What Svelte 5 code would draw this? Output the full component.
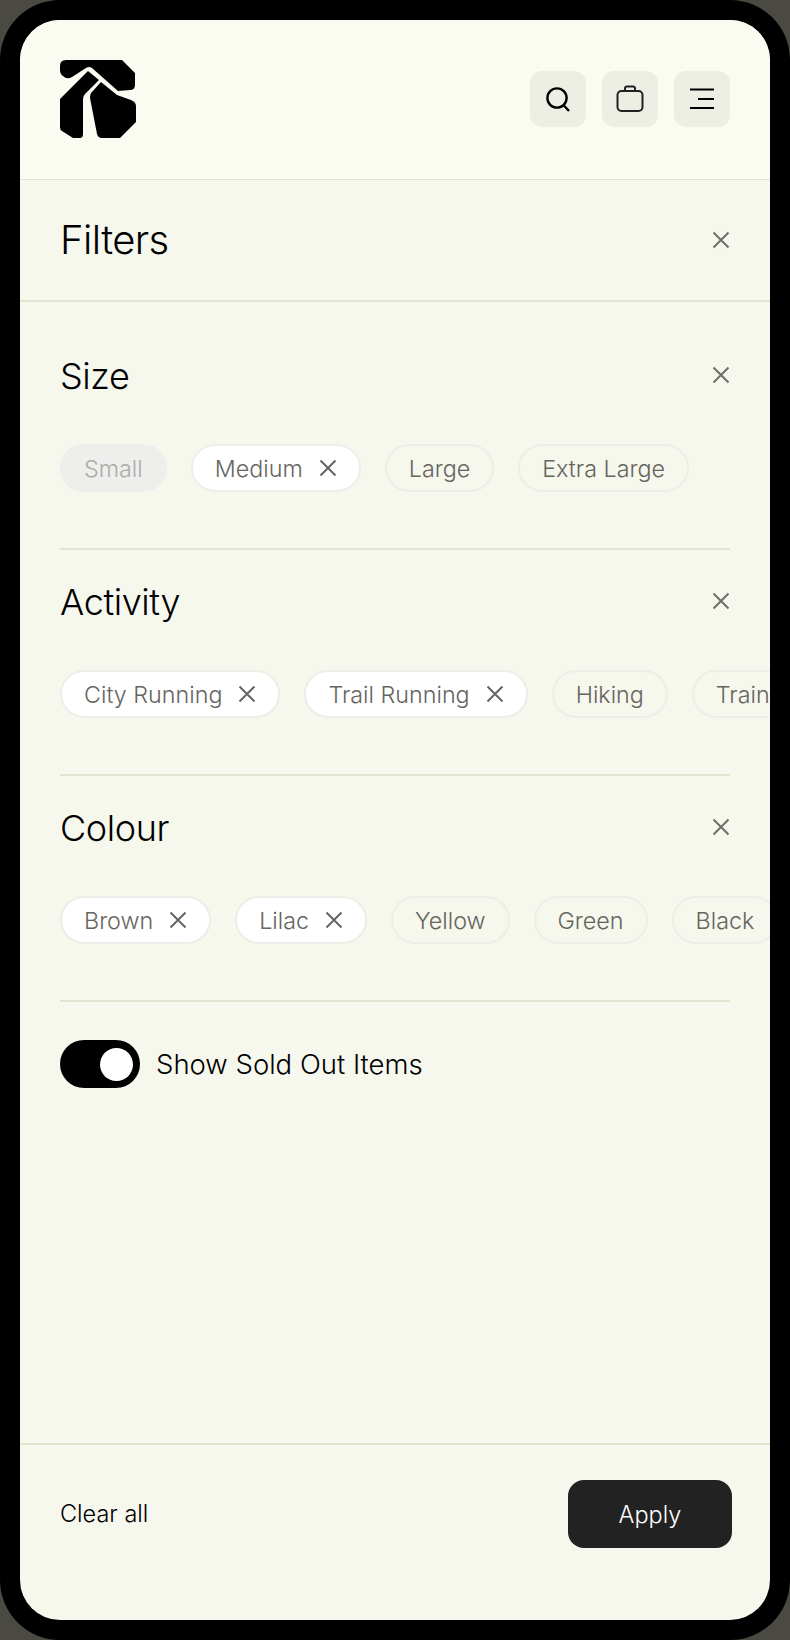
<script>
  const sections = [
    { title: 'Size', chips: [['Small','disabled'],['Medium','on'],['Large',''],['Extra Large','']] },
    { title: 'Activity', chips: [['City Running','on'],['Trail Running','on'],['Hiking',''],['Training','']] },
    { title: 'Colour', chips: [['Brown','on'],['Lilac','on'],['Yellow',''],['Green',''],['Black','']] }
  ];
</script>

{#snippet cross(cls)}
  <svg class={cls} viewBox="0 0 18 18" fill="none" stroke="currentColor" stroke-width="2"><path d="M1.500 1.500l15 15M16.500 1.500l-15 15"/></svg>
{/snippet}

<div class="device">
  <div class="screen">
    <header class="top">
      <svg class="logo" viewBox="60 60 76 78" fill="#000">
        <path d="M66 60H122L135 73V85Q135 90 130 90L118 91L92 68Q89 66 86 68L72 77Q67 80 63 76Q60 74 60 70V66Q60 60 66 60Z"/>
        <path d="M88 71L99 80L85 94Q83 96 83 99V134Q83 138 80 138H73L62 131Q60 130 60 127V99Z"/>
        <path d="M101 82L117 95L131 100Q136 102 136 106V122L120 138H102Q98 138 97 134L90 98Q90 95 91 93Z"/>
      </svg>
      <div class="actions">
        <button class="iconbtn" aria-label="Search">
          <svg viewBox="0 0 28 28" fill="none" stroke="#000" stroke-width="2.400"><circle cx="13" cy="13" r="9.600"/><path d="M19.500 20l5.500 6"/></svg>
        </button>
        <button class="iconbtn" aria-label="Bag">
          <svg viewBox="0 0 28 28" fill="none" stroke="#222" stroke-width="2"><rect x="1.500" y="6" width="25" height="20" rx="4"/><path d="M9 6V3.500Q9 1.500 11 1.500H17Q19 1.500 19 3.500V6"/></svg>
        </button>
        <button class="iconbtn" aria-label="Menu">
          <svg viewBox="0 0 28 28" fill="none" stroke="#000" stroke-width="2"><path d="M2 4.500H26M10 14H26M2 23H26"/></svg>
        </button>
      </div>
    </header>

    <div class="filters-head">
      <h1>Filters</h1>
      {@render cross('close')}
    </div>

    <main>
      {#each sections as s}
        <section>
          <div class="sec-head">
            <h2>{s.title}</h2>
            {@render cross('close')}
          </div>
          <div class="chips">
            {#each s.chips as [label, state]}
              <span class="chip {state}">
                {label}
                {#if state === 'on'}{@render cross('chip-x')}{/if}
              </span>
            {/each}
          </div>
        </section>
      {/each}

      <div class="toggle-row">
        <span class="toggle"><span class="knob"></span></span>
        <span class="toggle-label">Show Sold Out Items</span>
      </div>
    </main>

    <footer>
      <span class="clear">Clear all</span>
      <button class="apply">Apply</button>
    </footer>
  </div>
</div>

<style>
  :global(body) { margin: 0; background: #4a4a42; }
  .device {
    width: 790px; height: 1640px; box-sizing: border-box;
    background: #000; border-radius: 60px; padding: 20px;
    font-family: Inter, "Liberation Sans", sans-serif;
  }
  .screen {
    height: 1600px; background: #f6f7ed; border-radius: 40px; overflow: hidden;
    display: flex; flex-direction: column;
  }
  .top {
    height: 160px; box-sizing: border-box; flex: none; background: #fafbf1; border-bottom: 1px solid #e2e4d0;
    display: flex; align-items: center; justify-content: space-between;
    padding: 0 40px;
  }
  .logo { width: 76px; height: 78px; margin-top: -1px; }
  .actions { display: flex; gap: 16px; margin-top: -1px; }
  .iconbtn {
    width: 56px; height: 56px; border: 0; border-radius: 12px; background: #eeefe4;
    display: flex; align-items: center; justify-content: center; padding: 0;
  }
  .iconbtn svg { width: 28px; height: 28px; }
  .filters-head {
    flex: none; border-bottom: 2px solid #e2e4d0; box-sizing: border-box;
    display: flex; align-items: center; justify-content: space-between; padding: 0 40px;
    height: 122px;
  }
  h1 { margin: 0; font-size: 40px; font-weight: 300; color: #000; line-height: 48px; letter-spacing: -0.6px; }
  h2 { margin: 0; padding-top: 2px; font-size: 36px; font-weight: 300; color: #000; line-height: 38px; letter-spacing: -0.4px; }
  .close { width: 18px; height: 18px; color: #6f6f6a; display: block; }
  main { flex: 1; padding: 22px 40px 0; }
  section { border-bottom: 2px solid #e2e4d0; height: 226px; box-sizing: border-box; padding-top: 31px; }
  .sec-head { display: flex; align-items: center; justify-content: space-between; height: 40px; }
  .chips {
    display: flex; gap: 24px; margin-top: 49px; margin-right: -40px; overflow: hidden; white-space: nowrap;
  }
  .chip {
    flex: none; box-sizing: border-box; height: 48px; border-radius: 24px;
    border: 2px solid #eeeee8; padding: 0 22px; display: flex; align-items: center; gap: 16px;
    font-size: 23.3px; font-weight: 300; color: #656560;
  }
  .chip.on { background: #fff; }
  .chip.disabled { background: #eeeeec; border-color: #eeeeec; color: #abaca8; }
  .chip-x { width: 18px; height: 18px; color: #656560; }
  .toggle-row { display: flex; align-items: center; gap: 16px; margin-top: 38px; }
  .toggle { width: 80px; height: 48px; border-radius: 24px; background: #000; display: flex; align-items: center; justify-content: flex-end; padding-right: 7px; box-sizing: border-box; }
  .knob { width: 33px; height: 33px; border-radius: 50%; background: #fff; }
  .toggle-label { font-size: 27.5px; font-weight: 300; color: #000; }
  footer {
    height: 177px; flex: none; box-sizing: border-box; border-top: 2px solid #e2e4d0;
    display: flex; align-items: flex-start; justify-content: space-between;
    padding: 35px 38px 0 40px;
  }
  .clear { font-size: 23.5px; color: #000; font-weight: 300; line-height: 68px; }
  .apply {
    width: 164px; height: 68px; border: 0; border-radius: 16px; background: #222;
    color: #fff; font: 300 23.5px Inter, "Liberation Sans", sans-serif;
  }
</style>
